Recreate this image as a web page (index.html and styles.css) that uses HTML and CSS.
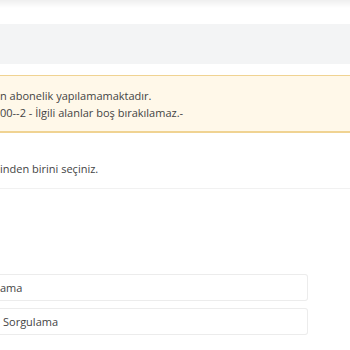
FILE: index.html
```html
<!DOCTYPE html>
<html lang="tr">
<head>
    <meta charset="UTF-8">
    <meta name="viewport" content="width=device-width, initial-scale=1.0">
    <title>Abonelik</title>
    <link rel="stylesheet" href="styles.css">
</head>
<body>
    <div class="header-shade"></div>

    <div class="page">
        <div class="toolbar"></div>

        <div class="alert">
            <p>n abonelik yapılamamaktadır.</p>
            <p>00--2 - İlgili alanlar boş bırakılamaz.-</p>
        </div>

        <div class="intro">
            <p>inden birini seçiniz.</p>
        </div>

        <div class="options">
            <div class="option">ama</div>
            <div class="option">Sorgulama</div>
        </div>
    </div>
</body>
</html>
```

FILE: styles.css
```css
body {
    margin: 0;
    font-family: "Open Sans", Arial, sans-serif;
    font-size: 11px;
    line-height: 17px;
    color: #444;
    background-color: #fff;
    overflow: hidden;
}
p {
    margin: 0;
}
.header-shade {
    height: 8px;
    background: linear-gradient(to bottom, #efefef, #fff);
}
.toolbar {
    height: 40px;
    margin-top: 16px;
    background-color: #f3f4f5;
}
.alert {
    margin-top: 11px;
    padding: 11px 0 10px 0;
    background-color: #fff8e9;
    border-top: 1px solid #f0d392;
    border-bottom: 2px solid #f0d392;
}
.intro {
    padding: 27px 0 11px 0;
    border-bottom: 1px solid #f1f1f1;
}
.options {
    margin-top: 85px;
    margin-right: 42px;
    display: flex;
    flex-direction: column;
    gap: 7px;
}
.option {
    height: 25px;
    line-height: 25px;
    padding-left: 3px;
    border: 1px solid #ececec;
    border-left: none;
    border-radius: 0 3px 3px 0;
}
.option:first-child {
    padding-left: 0;
}
```
